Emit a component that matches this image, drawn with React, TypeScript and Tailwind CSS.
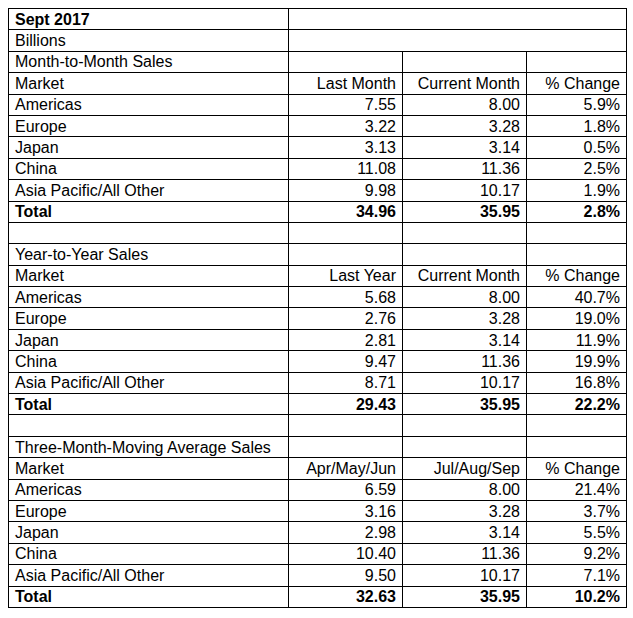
import React from 'react';

type Row = { label: string; a?: string; b?: string; c?: string; bold?: boolean };

const sections: { title: string; head: [string, string]; rows: Row[] }[] = [
  {
    title: 'Month-to-Month Sales',
    head: ['Last Month', 'Current Month'],
    rows: [
      { label: 'Americas', a: '7.55', b: '8.00', c: '5.9%' },
      { label: 'Europe', a: '3.22', b: '3.28', c: '1.8%' },
      { label: 'Japan', a: '3.13', b: '3.14', c: '0.5%' },
      { label: 'China', a: '11.08', b: '11.36', c: '2.5%' },
      { label: 'Asia Pacific/All Other', a: '9.98', b: '10.17', c: '1.9%' },
      { label: 'Total', a: '34.96', b: '35.95', c: '2.8%', bold: true },
    ],
  },
  {
    title: 'Year-to-Year Sales',
    head: ['Last Year', 'Current Month'],
    rows: [
      { label: 'Americas', a: '5.68', b: '8.00', c: '40.7%' },
      { label: 'Europe', a: '2.76', b: '3.28', c: '19.0%' },
      { label: 'Japan', a: '2.81', b: '3.14', c: '11.9%' },
      { label: 'China', a: '9.47', b: '11.36', c: '19.9%' },
      { label: 'Asia Pacific/All Other', a: '8.71', b: '10.17', c: '16.8%' },
      { label: 'Total', a: '29.43', b: '35.95', c: '22.2%', bold: true },
    ],
  },
  {
    title: 'Three-Month-Moving Average Sales',
    head: ['Apr/May/Jun', 'Jul/Aug/Sep'],
    rows: [
      { label: 'Americas', a: '6.59', b: '8.00', c: '21.4%' },
      { label: 'Europe', a: '3.16', b: '3.28', c: '3.7%' },
      { label: 'Japan', a: '2.98', b: '3.14', c: '5.5%' },
      { label: 'China', a: '10.40', b: '11.36', c: '9.2%' },
      { label: 'Asia Pacific/All Other', a: '9.50', b: '10.17', c: '7.1%' },
      { label: 'Total', a: '32.63', b: '35.95', c: '10.2%', bold: true },
    ],
  },
];

const cell = 'border-r border-b border-black flex items-center whitespace-nowrap px-[6px] pt-px';

function Line({ r }: { r: Row }) {
  const w = r.bold ? ' font-bold' : '';
  return (
    <>
      <div className={cell + w}>{r.label}</div>
      <div className={cell + ' justify-end' + w}>{r.a}</div>
      <div className={cell + ' justify-end' + w}>{r.b}</div>
      <div className={cell + ' justify-end' + w}>{r.c}</div>
    </>
  );
}

export default function App() {
  return (
    <div className="min-h-screen bg-white pt-2 pl-2">
      <div
        className="grid w-fit grid-cols-[280px_114px_124px_100px] auto-rows-[21.4px] border-l border-t border-black text-[16px] leading-none text-black"
        style={{ fontFamily: '"Liberation Sans", Arial, sans-serif' }}
      >
        <div className={cell + ' font-bold'}>Sept 2017</div>
        <div className={cell + ' col-span-3'}></div>
        <div className={cell}>Billions</div>
        <div className={cell + ' col-span-3'}></div>
        {sections.map((s, i) => (
          <React.Fragment key={s.title}>
            {i > 0 && <Line r={{ label: '' }} />}
            <Line r={{ label: s.title }} />
            <Line r={{ label: 'Market', a: s.head[0], b: s.head[1], c: '% Change' }} />
            {s.rows.map((r) => (
              <Line key={r.label} r={r} />
            ))}
          </React.Fragment>
        ))}
      </div>
    </div>
  );
}
